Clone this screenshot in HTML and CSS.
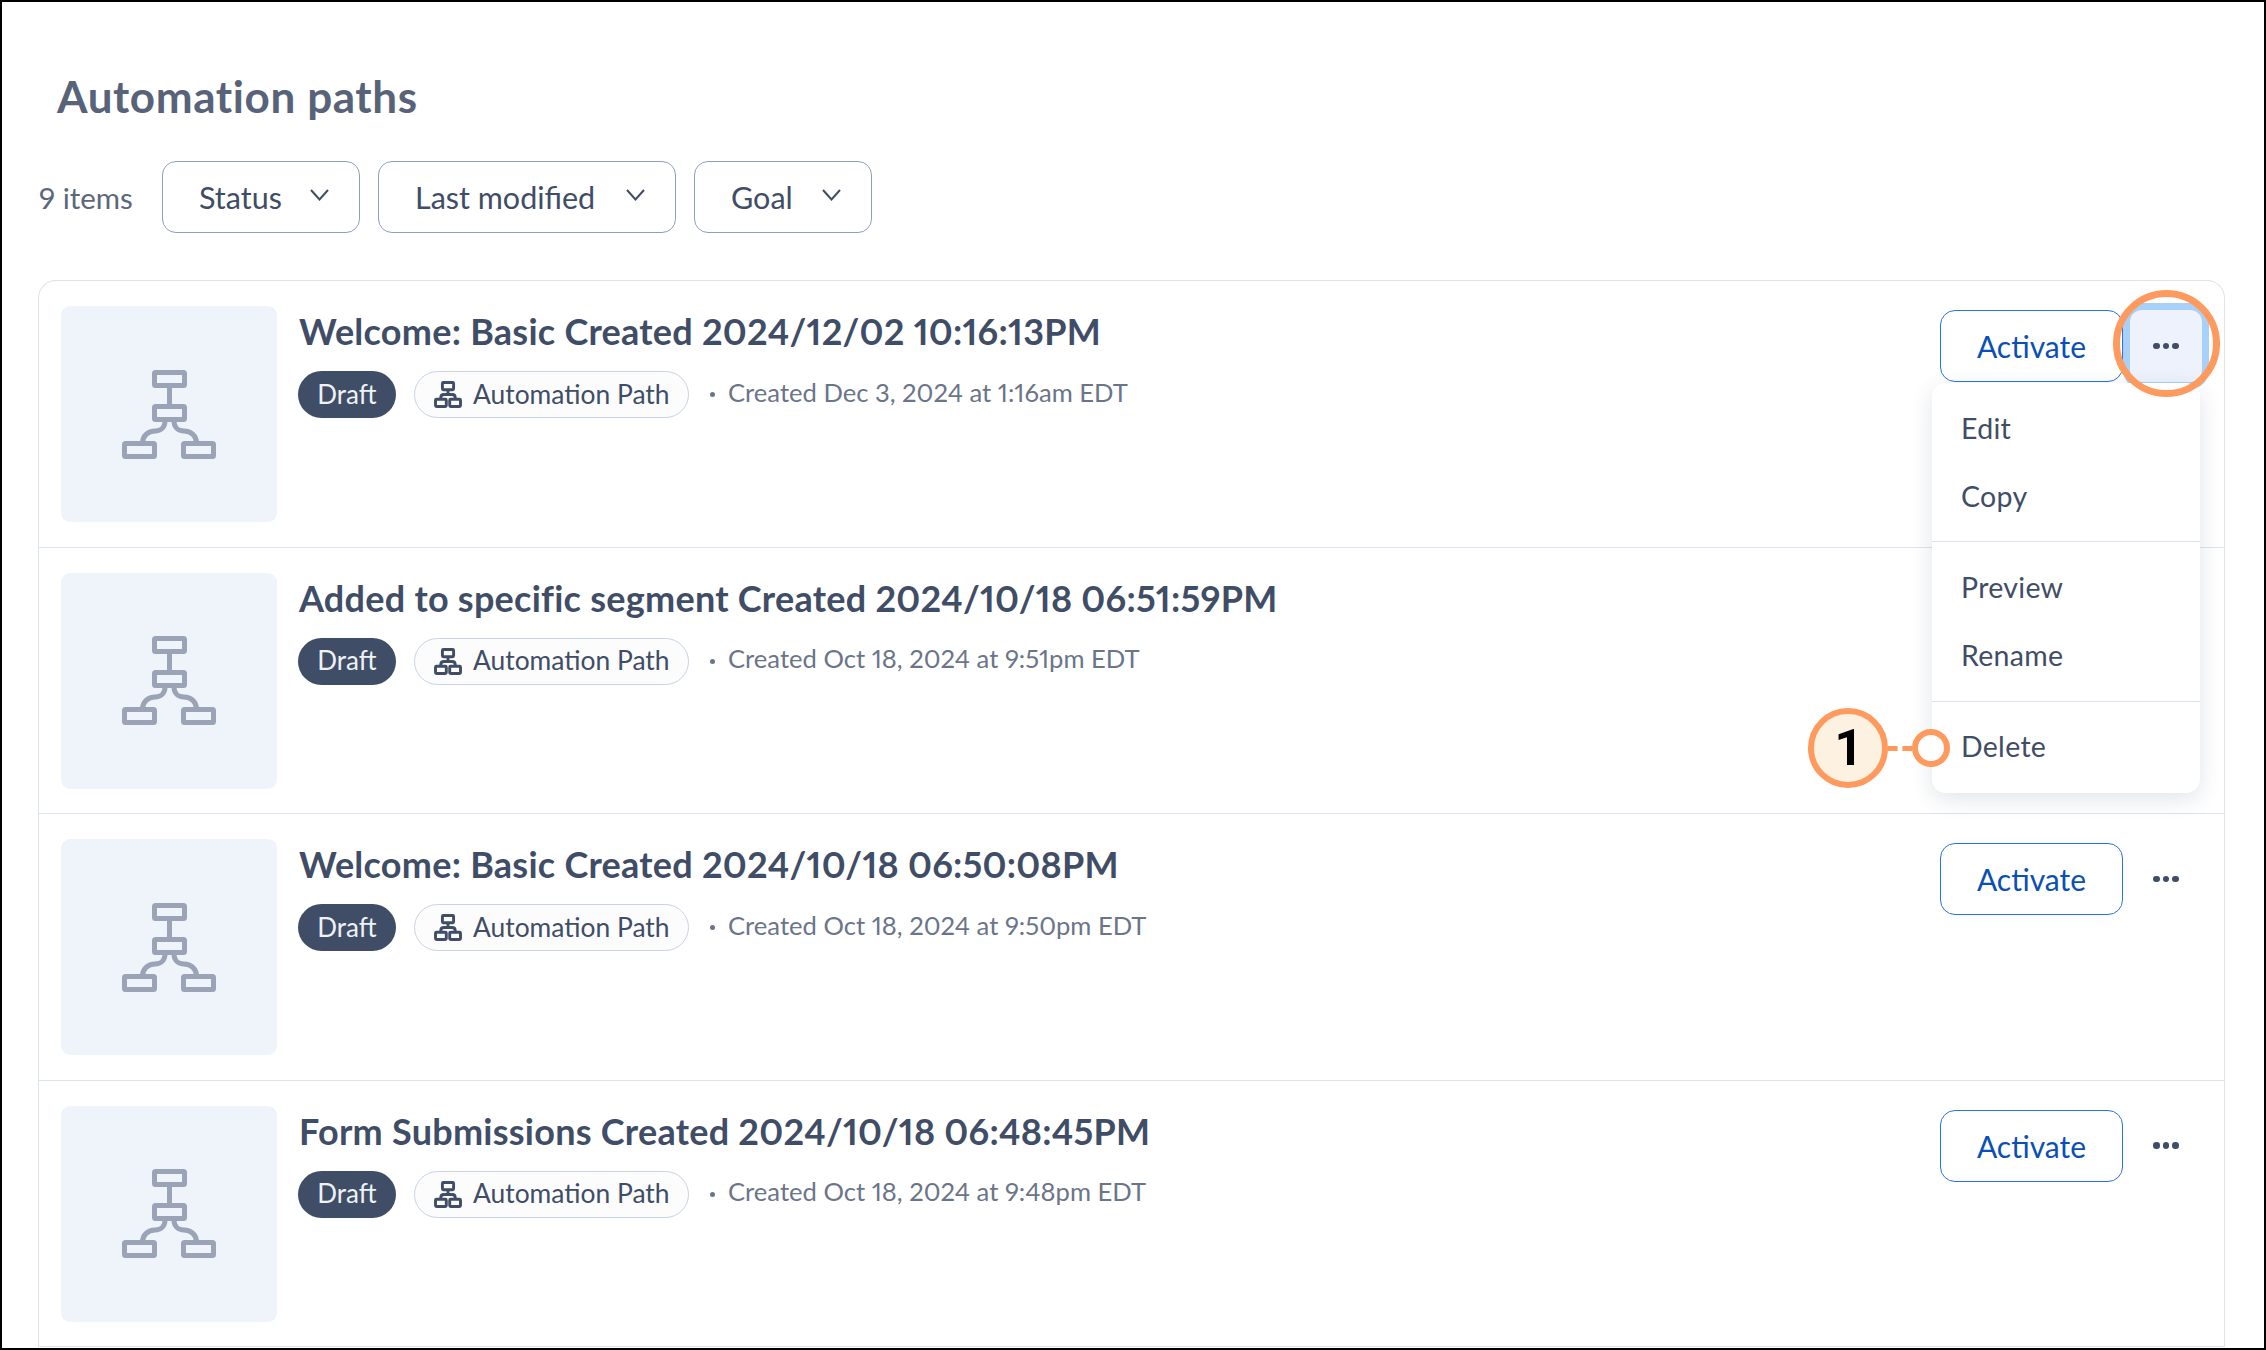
FILE: index.html
```html
<!DOCTYPE html>
<html>
<head>
  <title>Automation paths</title>
  <link rel="stylesheet" href="styles.css">
</head>
<body>
  <svg class="defs" width="0" height="0">
    <symbol id="path-big" viewBox="0 0 94 89">
      <g fill="none" stroke="currentColor" stroke-width="5" stroke-linejoin="round">
        <rect x="32.5" y="2.5" width="30" height="13" rx="1"/>
        <rect x="32.5" y="36.5" width="30" height="13" rx="1"/>
        <rect x="2.5" y="73.5" width="30" height="13" rx="1"/>
        <rect x="61.5" y="73.5" width="30" height="13" rx="1"/>
        <path d="M47.5 16V36"/>
        <path d="M43 51C43 57 39 61 33 61C26 61 20.5 66 20.5 73"/>
        <path d="M52 51C52 57 56 61 62 61C69 61 74.5 66 74.5 73"/>
      </g>
    </symbol>
    <symbol id="path-small" viewBox="0 0 28 27">
      <g fill="none" stroke="currentColor" stroke-width="2.9" stroke-linejoin="round">
        <rect x="8.4" y="1.5" width="11.2" height="7.2" rx="1"/>
        <rect x="1.5" y="18.3" width="10.8" height="7.2" rx="1"/>
        <rect x="15.7" y="18.3" width="10.8" height="7.2" rx="1"/>
        <path d="M14 9V12.5M6.8 18V16.5C6.8 14 8 13.5 10 13.5H18C20 13.5 21.2 14 21.2 16.5V18"/>
      </g>
    </symbol>
    <symbol id="chevron" viewBox="0 0 19 12">
      <path d="M1 1L9.5 10.5L18 1" fill="none" stroke="currentColor" stroke-width="2"/>
    </symbol>
  </svg>

  <div class="page">
    <h1 class="page-title">Automation paths</h1>

    <div class="filters">
      <span class="count">9 items</span>
      <button class="filter filter-status">Status <svg class="chevron"><use href="#chevron"/></svg></button>
      <button class="filter filter-modified">Last modified <svg class="chevron"><use href="#chevron"/></svg></button>
      <button class="filter filter-goal">Goal <svg class="chevron"><use href="#chevron"/></svg></button>
    </div>

    <div class="list">
      <div class="row">
        <div class="thumb"><svg class="thumb-icon"><use href="#path-big"/></svg></div>
        <div class="info">
          <h2 class="name">Welcome: Basic Created 2024/12/02 10:16:13PM</h2>
          <div class="meta">
            <span class="draft">Draft</span>
            <span class="kind"><svg class="kind-icon"><use href="#path-small"/></svg>Automation Path</span>
            <span class="dot"></span>
            <span class="created">Created Dec 3, 2024 at 1:16am EDT</span>
          </div>
        </div>
        <div class="actions">
          <button class="activate">Activate</button>
          <button class="more more-open"><span></span><span></span><span></span></button>
          <div class="ring"></div>
          <div class="menu">
            <div class="menu-group">
              <div class="menu-item">Edit</div>
              <div class="menu-item">Copy</div>
            </div>
            <div class="menu-group">
              <div class="menu-item">Preview</div>
              <div class="menu-item">Rename</div>
            </div>
            <div class="menu-group">
              <div class="menu-item">Delete</div>
            </div>
            <div class="callout">
              <div class="callout-num">1</div>
              <div class="callout-line"></div>
              <div class="callout-end"></div>
            </div>
          </div>
        </div>
      </div>

      <div class="row">
        <div class="thumb"><svg class="thumb-icon"><use href="#path-big"/></svg></div>
        <div class="info">
          <h2 class="name">Added to specific segment Created 2024/10/18 06:51:59PM</h2>
          <div class="meta">
            <span class="draft">Draft</span>
            <span class="kind"><svg class="kind-icon"><use href="#path-small"/></svg>Automation Path</span>
            <span class="dot"></span>
            <span class="created">Created Oct 18, 2024 at 9:51pm EDT</span>
          </div>
        </div>
      </div>

      <div class="row">
        <div class="thumb"><svg class="thumb-icon"><use href="#path-big"/></svg></div>
        <div class="info">
          <h2 class="name">Welcome: Basic Created 2024/10/18 06:50:08PM</h2>
          <div class="meta">
            <span class="draft">Draft</span>
            <span class="kind"><svg class="kind-icon"><use href="#path-small"/></svg>Automation Path</span>
            <span class="dot"></span>
            <span class="created">Created Oct 18, 2024 at 9:50pm EDT</span>
          </div>
        </div>
        <div class="actions">
          <button class="activate">Activate</button>
          <button class="more"><span></span><span></span><span></span></button>
        </div>
      </div>

      <div class="row">
        <div class="thumb"><svg class="thumb-icon"><use href="#path-big"/></svg></div>
        <div class="info">
          <h2 class="name">Form Submissions Created 2024/10/18 06:48:45PM</h2>
          <div class="meta">
            <span class="draft">Draft</span>
            <span class="kind"><svg class="kind-icon"><use href="#path-small"/></svg>Automation Path</span>
            <span class="dot"></span>
            <span class="created">Created Oct 18, 2024 at 9:48pm EDT</span>
          </div>
        </div>
        <div class="actions">
          <button class="activate">Activate</button>
          <button class="more"><span></span><span></span><span></span></button>
        </div>
      </div>
    </div>
  </div>
</body>
</html>
```
FILE: styles.css
```css
* {
  box-sizing: border-box;
}
html, body {
  margin: 0;
  height: 100%;
}
body {
  font-family: "Lato", "Liberation Sans", sans-serif;
  font-variant-numeric: proportional-nums;
  background: #fff;
  color: #3f4d66;
  overflow: hidden;
}
button {
  font-family: inherit;
  font-variant-numeric: inherit;
  background: #fff;
  cursor: pointer;
  padding: 0;
}
.defs {
  position: absolute;
}
.page {
  height: 1350px;
  border: 2px solid #000;
  padding: 0 39px 0 36px;
  overflow: hidden;
}
.page-title {
  margin: 69px 0 0 19px;
  font-size: 44px;
  line-height: 50px;
  letter-spacing: 0.6px;
  font-weight: 700;
  color: #586379;
}
.filters {
  display: flex;
  align-items: center;
  margin-top: 40px;
  height: 72px;
}
.count {
  width: 124px;
  padding-left: 1px;
  font-size: 29.5px;
  color: #5d677b;
}
.filter {
  display: flex;
  align-items: center;
  justify-content: space-between;
  height: 72px;
  margin-right: 18px;
  padding: 0 30px 0 36px;
  border: 1px solid #8e9fc0;
  border-radius: 14px;
  font-size: 30.5px;
  color: #3f4d66;
}
.filter-status {
  width: 198px;
}
.filter-modified {
  width: 298px;
}
.filter-goal {
  width: 178px;
}
.chevron {
  width: 19px;
  height: 12px;
  margin-top: -4px;
}
.list {
  margin-top: 47px;
  border: 1px solid #dde4ee;
  border-bottom: none;
  border-radius: 18px 18px 0 0;
}
.row {
  display: flex;
  height: 266.5px;
  padding: 25px 22px 0 22px;
  border-bottom: 1px solid #dde4ee;
}
.thumb {
  flex: none;
  display: flex;
  align-items: center;
  justify-content: center;
  width: 216px;
  height: 216px;
  border-radius: 9px;
  background: #eff4fb;
  color: #9aa4b6;
}
.thumb-icon {
  width: 94px;
  height: 89px;
}
.info {
  flex: 1;
  margin-left: 22px;
}
.name {
  margin: 0;
  font-size: 36px;
  line-height: 50px;
  letter-spacing: 0.25px;
  font-weight: 700;
  color: #3f4d66;
}
.meta {
  display: flex;
  align-items: center;
  margin-top: 15px;
  margin-left: -1px;
  height: 47px;
}
.draft {
  display: flex;
  align-items: center;
  justify-content: center;
  width: 98px;
  height: 47px;
  padding-bottom: 2px;
  border-radius: 24px;
  background: #3f4d66;
  color: #eef1f6;
  font-size: 26px;
}
.kind {
  display: flex;
  align-items: center;
  width: 275px;
  height: 47px;
  margin-left: 18px;
  padding: 0 0 2px 19px;
  border: 1px solid #c9d3e5;
  border-radius: 24px;
  background: #fcfcfd;
  font-size: 26.4px;
}
.kind-icon {
  width: 28px;
  height: 27px;
  margin: 2px 11px 0 0;
}
.dot {
  width: 5px;
  height: 5px;
  margin-left: 21px;
  border-radius: 50%;
  background: #6b7589;
}
.created {
  margin-left: 13px;
  margin-top: -6px;
  font-size: 25.6px;
  color: #6b7589;
}
.actions {
  position: relative;
  flex: none;
  display: flex;
  gap: 7px;
  align-items: flex-start;
  margin-top: 4px;
}
.activate {
  width: 183px;
  height: 72px;
  border: 1px solid #2a72e0;
  border-radius: 15px;
  font-size: 30px;
  color: #0a4fb5;
}
.more {
  position: relative;
  display: flex;
  gap: 3px;
  align-items: center;
  justify-content: center;
  width: 72px;
  height: 72px;
  border: none;
  border-radius: 12px;
  background: #fff;
}
.more span {
  width: 6.5px;
  height: 6.5px;
  border-radius: 50%;
  background: #3f4d66;
}
.more-open {
  background: #edf2fc;
  box-shadow: 0 0 0 7px #a9d0f8;
}
/* orange ring around the open button */
.ring {
  position: absolute;
  z-index: 3;
  left: 173px;
  top: -20px;
  width: 107px;
  height: 107px;
  border: 7px solid #ff9a5e;
  border-radius: 50%;
}
.menu {
  position: absolute;
  z-index: 2;
  left: -8px;
  top: 73px;
  width: 268px;
  height: 410px;
  border-radius: 14px;
  background: #fff;
  box-shadow: 0 6px 22px rgba(50, 65, 95, 0.14);
}
.menu-group {
  padding: 11px 0;
  border-bottom: 1px solid #dde0ea;
}
.menu-group:nth-child(2) {
  padding-bottom: 12px;
}
.menu-group:nth-child(3) {
  padding-top: 10px;
  border-bottom: none;
}
.menu-item {
  height: 68px;
  line-height: 68px;
  padding-left: 29px;
  font-size: 28.5px;
  letter-spacing: 0.3px;
  color: #3f4d66;
}
/* numbered marker pointing at Delete */
.callout {
  position: absolute;
  left: -124px;
  top: 325px;
  display: flex;
  align-items: center;
}
.callout-num {
  display: flex;
  align-items: center;
  justify-content: center;
  width: 80px;
  height: 80px;
  border: 6px solid #ff9a5e;
  border-radius: 50%;
  background: #fdf2e2;
  font-family: "Roboto", sans-serif;
  font-size: 50px;
  font-weight: 700;
  color: #000;
}
.callout-line {
  width: 24px;
  border-top: 5px dashed #ff9a5e;
}
.callout-end {
  width: 38px;
  height: 38px;
  border: 6px solid #ff9a5e;
  border-radius: 50%;
  background: #fff;
}
```
